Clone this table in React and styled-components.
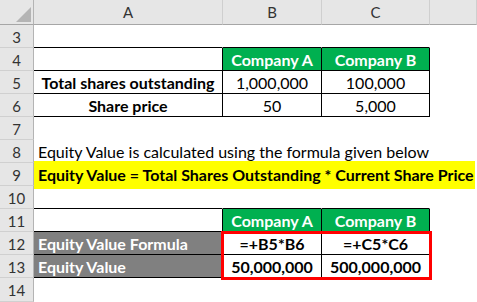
import React from "react";
import styled, { createGlobalStyle } from "styled-components";

const Global = createGlobalStyle`
  html, body { margin: 0; padding: 0; background: #fff; }
  body { font-family: Lato, "Liberation Sans", sans-serif; }
`;

const Sheet = styled.div`
  display: grid;
  grid-template-columns: 34px 189px 99px 108px 47px;
  grid-template-rows: 25px repeat(11, 23px) 24px;
  width: 477px;
  height: 302px;
  overflow: hidden;
  background: #fff;
  font-size: 16px;
`;

const Corner = styled.div`
  box-sizing: border-box;
  background: #e6e6e6;
  border-right: 1px solid #b4b4b4;
  border-bottom: 1px solid #a6a6a6;
  display: flex;
  align-items: flex-end;
  justify-content: flex-end;
  padding: 0 2px 2px 0;
`;

const ColHead = styled.div`
  box-sizing: border-box;
  background: #e6e6e6;
  border-right: 1px solid #cfcfcf;
  border-bottom: 1px solid #a6a6a6;
  color: #333;
  font-size: 15px;
  display: flex;
  align-items: center;
  justify-content: center;
`;

const RowHead = styled.div`
  box-sizing: border-box;
  background: #e6e6e6;
  border-right: 1px solid #b4b4b4;
  border-bottom: 1px solid #d0d0d0;
  color: #333;
  font-size: 15px;
  display: flex;
  align-items: center;
  justify-content: center;
  padding-top: 1px;
`;

const Cell = styled.div`
  box-sizing: border-box;
  border-right: 1px solid ${(p) => p.$r || "transparent"};
  border-bottom: 1px solid ${(p) => p.$b || "transparent"};
  background: ${(p) => p.$bg || "transparent"};
  color: ${(p) => p.$color || "#000"};
  font-weight: ${(p) => (p.$bold ? 700 : 400)};
  display: flex;
  align-items: center;
  justify-content: ${(p) => (p.$left ? "flex-start" : "center")};
  padding: 1px 0 0 ${(p) => (p.$left ? "4px" : "0")};
  white-space: nowrap;
  overflow: visible;
`;

const Wide = styled(Cell)`
  grid-column: span 4;
`;

const Highlight = styled(Cell)`
  grid-column: span 4;
  background: #ffff00;
  margin: -2px 2px -3px 0;
  padding-top: 0;
`;

const Selection = styled.div`
  grid-column: 3 / 5;
  grid-row: 11 / 13;
  position: relative;
  display: grid;
  grid-template-columns: 99px 108px;
  grid-template-rows: 23px 23px;
  &::after {
    content: "";
    position: absolute;
    top: -1px;
    left: -2px;
    right: -2px;
    bottom: -2px;
    border: 3px solid #ff0000;
    pointer-events: none;
  }
`;

const K = "#000";
const GREEN = "#00b050";
const GRAY = "#808080";

export default function App() {
  return (
    <>
      <Global />
      <Sheet>
        <Corner>
          <svg width="15" height="15" viewBox="0 0 15 15">
            <polygon points="15,0 15,15 0,15" fill="#b4b4b4" />
          </svg>
        </Corner>
        <ColHead>A</ColHead>
        <ColHead>B</ColHead>
        <ColHead>C</ColHead>
        <ColHead />

        <RowHead>3</RowHead>
        <Cell $b={K} />
        <Cell $b={K} />
        <Cell $b={K} />
        <Cell />

        <RowHead>4</RowHead>
        <Cell $b={K} $r={K} />
        <Cell $b={K} $r={K} $bg={GREEN} $color="#fff" $bold>Company A</Cell>
        <Cell $b={K} $r={K} $bg={GREEN} $color="#fff" $bold>Company B</Cell>
        <Cell />

        <RowHead>5</RowHead>
        <Cell $b={K} $r={K} $bold>Total shares outstanding</Cell>
        <Cell $b={K} $r={K}>1,000,000</Cell>
        <Cell $b={K} $r={K}>100,000</Cell>
        <Cell />

        <RowHead>6</RowHead>
        <Cell $b={K} $r={K} $bold>Share price</Cell>
        <Cell $b={K} $r={K}>50</Cell>
        <Cell $b={K} $r={K}>5,000</Cell>
        <Cell />

        <RowHead>7</RowHead>
        <Wide />

        <RowHead>8</RowHead>
        <Wide $left>Equity Value is calculated using the formula given below</Wide>

        <RowHead>9</RowHead>
        <Highlight $left $bold>Equity Value = Total Shares Outstanding * Current Share Price</Highlight>

        <RowHead>10</RowHead>
        <Cell $b={K} />
        <Cell $b={K} />
        <Cell $b={K} />
        <Cell />

        <RowHead>11</RowHead>
        <Cell $b={K} $r={K} />
        <Cell $r={K} $bg={GREEN} $color="#fff" $bold>Company A</Cell>
        <Cell $r={K} $bg={GREEN} $color="#fff" $bold>Company B</Cell>
        <Cell />

        <Selection>
          <Cell $b={K} $r={K} $bold>=+B5*B6</Cell>
          <Cell $b={K} $bold>=+C5*C6</Cell>
          <Cell $r={K} $bold>50,000,000</Cell>
          <Cell $bold>500,000,000</Cell>
        </Selection>

        <RowHead>12</RowHead>
        <Cell $b={K} $bg={GRAY} $color="#fff" $bold $left>Equity Value Formula</Cell>
        <Cell />

        <RowHead>13</RowHead>
        <Cell $b={K} $bg={GRAY} $color="#fff" $bold $left>Equity Value</Cell>
        <Cell />

        <RowHead>14</RowHead>
        <Wide />
      </Sheet>
    </>
  );
}
